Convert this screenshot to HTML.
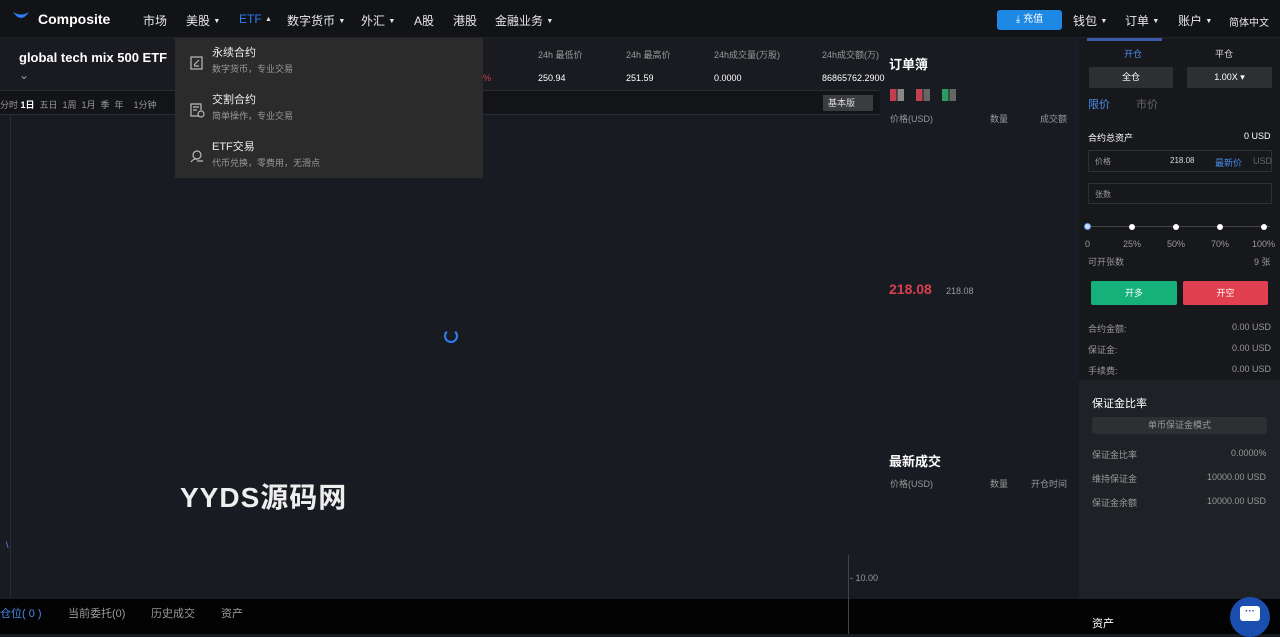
<!DOCTYPE html>
<html><head><meta charset="utf-8"><style>
*{margin:0;padding:0;box-sizing:border-box}
body{width:1280px;height:634px;overflow:hidden;background:#181b21;font-family:"Liberation Sans","Noto Sans CJK SC",sans-serif;color:#ddd;position:relative;font-size:12px}
.a{position:absolute;white-space:nowrap}
.nav{left:0;top:0;width:1280px;height:38px;background:#121316;border-bottom:1px solid #222}
.nav .a{top:12px;font-size:12px;color:#e8e8e8}
.c{font-size:7px;vertical-align:2px}
.s9{font-size:9px}
.g{color:#999}
</style></head><body>
<div class="a nav">
 <svg class="a" style="left:12px;top:11px" width="18" height="10"><path d="M1 1 Q9 13 17 1 Q9 6 1 1Z" fill="#2f7df6"/></svg>
 <div class="a" style="left:38px;top:11px;font-size:14px;font-weight:bold;color:#fff">Composite</div>
 <div class="a" style="left:143px">市场</div>
 <div class="a" style="left:186px">美股 <span class="c">▼</span></div>
 <div class="a" style="left:239px;color:#2f7df6">ETF <span class="c" style="color:#ddd">▲</span></div>
 <div class="a" style="left:287px">数字货币 <span class="c">▼</span></div>
 <div class="a" style="left:361px">外汇 <span class="c">▼</span></div>
 <div class="a" style="left:414px">A股</div>
 <div class="a" style="left:453px">港股</div>
 <div class="a" style="left:495px">金融业务 <span class="c">▼</span></div>
 <div class="a" style="left:997px;top:10px;width:65px;height:20px;background:#1e88e5;border-radius:3px;color:#fff;font-size:10px;text-align:center;line-height:20px">⤓ 充值</div>
 <div class="a" style="left:1073px">钱包 <span class="c">▼</span></div>
 <div class="a" style="left:1125px">订单 <span class="c">▼</span></div>
 <div class="a" style="left:1178px">账户 <span class="c">▼</span></div>
 <div class="a" style="left:1229px;font-size:10px;top:14px">简体中文</div>
</div>
<!-- ticker -->
<div class="a" style="left:0;top:39px;width:880px;height:52px;background:#191b20;border-bottom:1px solid #2a2c30"></div>
<div class="a" style="left:19px;top:50px;font-size:13px;font-weight:bold;color:#fff">global tech mix 500 ETF</div>
<div class="a g" style="left:19px;top:68px">⌄</div>
<div class="a s9 g" style="left:538px;top:48px">24h 最低价</div>
<div class="a s9 g" style="left:626px;top:48px">24h 最高价</div>
<div class="a s9 g" style="left:714px;top:48px">24h成交量(万股)</div>
<div class="a s9 g" style="left:822px;top:48px">24h成交额(万)</div>
<div class="a s9" style="left:483px;top:73px;color:#d04050">%</div>
<div class="a s9" style="left:538px;top:73px;color:#fff">250.94</div>
<div class="a s9" style="left:626px;top:73px;color:#fff">251.59</div>
<div class="a s9" style="left:714px;top:73px;color:#fff">0.0000</div>
<div class="a s9" style="left:822px;top:73px;color:#fff">86865762.2900</div>
<!-- toolbar -->
<div class="a" style="left:0;top:91px;width:880px;height:24px;background:#131417;border-bottom:1px solid #2a2c30"></div>
<div class="a s9 g" style="left:0;top:98px">分时 <b style="color:#fff">1日</b> &nbsp;五日 &nbsp;1周 &nbsp;1月 &nbsp;季 &nbsp;年 &nbsp;&nbsp;&nbsp;1分钟</div>
<div class="a s9" style="left:823px;top:95px;width:50px;height:16px;background:#3a3c40;color:#ddd;line-height:16px;padding-left:5px">基本版</div>
<div class="a" style="left:10px;top:115px;width:1px;height:483px;background:#2a2c30"></div>
<div class="a" style="left:848px;top:555px;width:1px;height:79px;background:#444"></div>
<div class="a s9 g" style="left:850px;top:573px">- 10.00</div>
<div class="a s9 g" style="left:850px;top:623px">- 8.00</div>
<div class="a" style="left:444px;top:329px;width:14px;height:14px;border:2px solid #2f7df6;border-top-color:transparent;border-radius:50%"></div>
<div class="a" style="left:180px;top:476px;font-size:28px;font-weight:bold;color:#eee;letter-spacing:1px">YYDS源码网</div>
<div class="a" style="left:6px;top:540px;font-size:9px;color:#59f">\</div>
<!-- bottom tabs -->
<div class="a" style="left:0;top:599px;width:1280px;height:35px;background:#030303"></div>
<div class="a" style="left:0;top:605px;font-size:11px;color:#4a8cf0">仓位( 0 )</div>
<div class="a g" style="left:68px;top:605px;font-size:11px">当前委托(0)</div>
<div class="a g" style="left:151px;top:605px;font-size:11px">历史成交</div>
<div class="a g" style="left:221px;top:605px;font-size:11px">资产</div>
<div class="a" style="left:848px;top:599px;width:1px;height:35px;background:#444"></div>
<!-- orderbook -->
<div class="a" style="left:889px;top:54px;font-size:13px;font-weight:bold;color:#fff">订单簿</div>
<div class="a" style="left:890px;top:89px;width:14px;height:12px;background:linear-gradient(90deg,#c04050 0 45%,transparent 45% 55%,#888 55%)"></div>
<div class="a" style="left:916px;top:89px;width:14px;height:12px;background:linear-gradient(90deg,#c04050 0 45%,transparent 45% 55%,#666 55%)"></div>
<div class="a" style="left:942px;top:89px;width:14px;height:12px;background:linear-gradient(90deg,#2a9a60 0 45%,transparent 45% 55%,#666 55%)"></div>
<div class="a s9 g" style="left:890px;top:112px">价格(USD)</div>
<div class="a s9 g" style="left:990px;top:112px">数量</div>
<div class="a s9 g" style="left:1040px;top:112px">成交额</div>
<div class="a" style="left:889px;top:281px;font-size:14px;font-weight:bold;color:#d8404f">218.08</div>
<div class="a s9 g" style="left:946px;top:286px">218.08</div>
<div class="a" style="left:889px;top:451px;font-size:13px;font-weight:bold;color:#fff">最新成交</div>
<div class="a s9 g" style="left:890px;top:477px">价格(USD)</div>
<div class="a s9 g" style="left:990px;top:477px">数量</div>
<div class="a s9 g" style="left:1031px;top:477px">开仓时间</div>
<!-- right -->
<div class="a" style="left:1079px;top:39px;width:201px;height:341px;background:#17181b"></div>
<div class="a" style="left:1079px;top:380px;width:201px;height:219px;background:#1e2125"></div>
<div class="a" style="left:1087px;top:38px;width:75px;height:3px;background:#3b5aa8"></div>
<div class="a s9" style="left:1124px;top:47px;color:#4a8cf0">开仓</div>
<div class="a s9" style="left:1215px;top:47px;color:#ddd">平仓</div>
<div class="a s9" style="left:1089px;top:67px;width:84px;height:21px;background:#2d2f33;text-align:center;line-height:21px;color:#fff">全仓</div>
<div class="a s9" style="left:1187px;top:67px;width:85px;height:21px;background:#2d2f33;text-align:center;line-height:21px;color:#fff">1.00X ▾</div>
<div class="a" style="left:1088px;top:96px;font-size:11px;color:#4a8cf0">限价</div>
<div class="a g" style="left:1136px;top:96px;font-size:11px;color:#666">市价</div>
<div class="a s9" style="left:1088px;top:131px;color:#fff">合约总资产</div>
<div class="a s9" style="left:1244px;top:131px;color:#fff">0 USD</div>
<div class="a" style="left:1088px;top:150px;width:184px;height:22px;border:1px solid #2e3034"></div>
<div class="a s9 g" style="left:1095px;top:156px;font-size:8px">价格</div>
<div class="a s9" style="left:1170px;top:156px;font-size:8px;color:#ddd">218.08</div>
<div class="a s9" style="left:1215px;top:156px;color:#4a8cf0">最新价</div>
<div class="a s9" style="left:1253px;top:156px;color:#666">USD</div>
<div class="a" style="left:1088px;top:183px;width:184px;height:21px;border:1px solid #2e3034"></div>
<div class="a s9 g" style="left:1095px;top:189px;font-size:8px">张数</div>
<div class="a" style="left:1088px;top:226px;width:182px;height:1px;background:#444"></div>
<div class="a" style="left:1084px;top:223px;width:7px;height:7px;border-radius:50%;background:#cde;border:1px solid #59f"></div>
<div class="a" style="left:1129px;top:224px;width:6px;height:6px;border-radius:50%;background:#fff"></div>
<div class="a" style="left:1173px;top:224px;width:6px;height:6px;border-radius:50%;background:#fff"></div>
<div class="a" style="left:1217px;top:224px;width:6px;height:6px;border-radius:50%;background:#fff"></div>
<div class="a" style="left:1261px;top:224px;width:6px;height:6px;border-radius:50%;background:#fff"></div>
<div class="a s9 g" style="left:1085px;top:239px">0</div>
<div class="a s9 g" style="left:1123px;top:239px">25%</div>
<div class="a s9 g" style="left:1167px;top:239px">50%</div>
<div class="a s9 g" style="left:1211px;top:239px">70%</div>
<div class="a s9 g" style="left:1252px;top:239px">100%</div>
<div class="a s9 g" style="left:1088px;top:255px">可开张数</div>
<div class="a s9 g" style="left:1254px;top:255px">9 张</div>
<div class="a s9" style="left:1091px;top:281px;width:86px;height:24px;background:#16b07a;border-radius:2px;text-align:center;line-height:24px;color:#fff">开多</div>
<div class="a s9" style="left:1183px;top:281px;width:85px;height:24px;background:#e0404f;border-radius:2px;text-align:center;line-height:24px;color:#fff">开空</div>
<div class="a s9 g" style="left:1088px;top:322px">合约金额:</div><div class="a s9 g" style="left:1232px;top:322px">0.00 USD</div>
<div class="a s9 g" style="left:1088px;top:343px">保证金:</div><div class="a s9 g" style="left:1232px;top:343px">0.00 USD</div>
<div class="a s9 g" style="left:1088px;top:364px">手续费:</div><div class="a s9 g" style="left:1232px;top:364px">0.00 USD</div>
<div class="a" style="left:1092px;top:395px;font-size:11px;color:#fff">保证金比率</div>
<div class="a s9 g" style="left:1092px;top:417px;width:175px;height:17px;background:#2d2f33;border-radius:3px;text-align:center;line-height:17px">单币保证金模式</div>
<div class="a s9 g" style="left:1092px;top:448px">保证金比率</div><div class="a s9 g" style="left:1231px;top:448px">0.0000%</div>
<div class="a s9 g" style="left:1092px;top:472px">维持保证金</div><div class="a s9 g" style="left:1207px;top:472px">10000.00 USD</div>
<div class="a s9 g" style="left:1092px;top:496px">保证金余额</div><div class="a s9 g" style="left:1207px;top:496px">10000.00 USD</div>
<div class="a" style="left:1092px;top:615px;font-size:11px;color:#fff">资产</div>
<div class="a" style="left:1230px;top:597px;width:40px;height:40px;border-radius:50%;background:#1a4fb0"></div>
<div class="a" style="left:1240px;top:606px;width:20px;height:15px;background:#fff;border-radius:3px;color:#1a4fb0;font-size:10px;text-align:center;line-height:11px;font-weight:bold">···</div>
<!-- dropdown -->
<div class="a" style="left:175px;top:38px;width:308px;height:140px;background:#2b2b2c"></div>
<svg class="a" style="left:189px;top:55px" width="16" height="16" fill="none" stroke="#bbb" stroke-width="1.2"><rect x="2" y="2" width="11" height="12"/><path d="M5 10l5-5M5 11h5"/></svg>
<div class="a" style="left:212px;top:44px;font-size:11px;color:#eee">永续合约</div>
<div class="a s9 g" style="left:212px;top:62px">数字货币，专业交易</div>
<svg class="a" style="left:189px;top:102px" width="16" height="16" fill="none" stroke="#bbb" stroke-width="1.2"><path d="M10 14H2V2h10v6"/><circle cx="12" cy="12" r="3"/><path d="M4 5h6M4 8h4"/></svg>
<div class="a" style="left:212px;top:91px;font-size:11px;color:#eee">交割合约</div>
<div class="a s9 g" style="left:212px;top:109px">简单操作，专业交易</div>
<svg class="a" style="left:189px;top:149px" width="16" height="16" fill="none" stroke="#bbb" stroke-width="1.2"><circle cx="8" cy="6" r="4"/><path d="M2 13c2-3 4-3 6-3M8 12h6"/></svg>
<div class="a" style="left:212px;top:138px;font-size:11px;color:#eee">ETF交易</div>
<div class="a s9 g" style="left:212px;top:156px">代币兑换，零费用，无滑点</div>
</body></html>
